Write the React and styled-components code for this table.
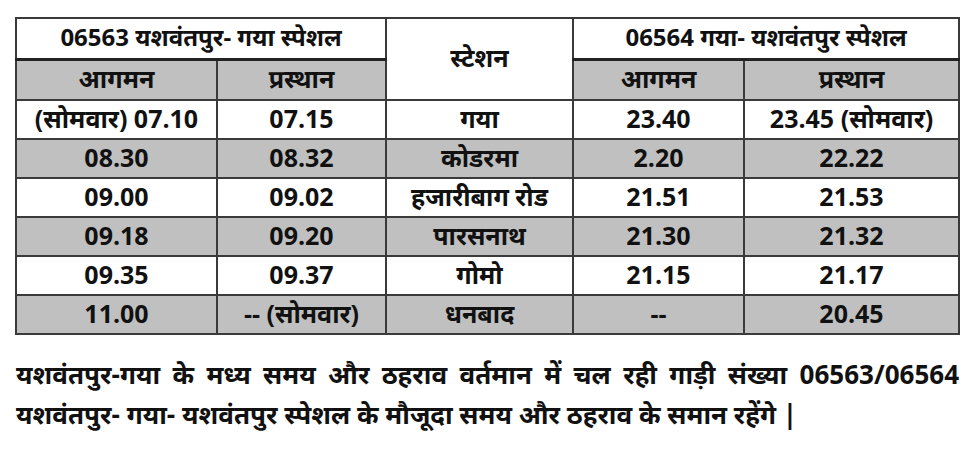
import React from 'react'
import styled, { createGlobalStyle } from 'styled-components'

const GlobalStyle = createGlobalStyle`
  html, body {
    margin: 0;
    padding: 0;
    background: #ffffff;
  }
  body {
    font-family: "Open Sans", "Noto Sans", "Liberation Sans", sans-serif;
    color: #111111;
  }
`

const Page = styled.div`
  width: 979px;
  height: 457px;
  padding: 17px 21px 0 15px;
  box-sizing: border-box;
`

const Table = styled.table`
  width: 943px;
  border-collapse: collapse;
  table-layout: fixed;
  border: 2px solid #333333;
`

const Cell = styled.td`
  border: 2px solid #3a3a3a;
  border-bottom-width: ${(p) => (p.$thick ? '3px' : '2px')};
  border-bottom-color: ${(p) => (p.$thick ? '#222222' : '#3a3a3a')};
  background: ${(p) => (p.$gray ? '#c0c0c0' : '#ffffff')};
  height: ${(p) => p.$h || 34}px;
  padding: 0 0 3px;
  text-align: center;
  vertical-align: middle;
  font-size: ${(p) => p.$size || 25}px;
  font-weight: 700;
  line-height: 1;
  white-space: nowrap;
`

const Note = styled.div`
  margin: 19px 0 0 1px;
  width: 943px;
  font-size: 26px;
  font-weight: 700;
  line-height: 40px;
`

const Line = styled.div`
  white-space: nowrap;
  text-align: ${(p) => (p.$justify ? 'justify' : 'left')};
  text-align-last: ${(p) => (p.$justify ? 'justify' : 'left')};
`

const rows = [
  ['(सोमवार) 07.10', '07.15', 'गया', '23.40', '23.45 (सोमवार)'],
  ['08.30', '08.32', 'कोडरमा', '2.20', '22.22'],
  ['09.00', '09.02', 'हजारीबाग रोड', '21.51', '21.53'],
  ['09.18', '09.20', 'पारसनाथ', '21.30', '21.32'],
  ['09.35', '09.37', 'गोमो', '21.15', '21.17'],
  ['11.00', '-- (सोमवार)', 'धनबाद', '--', '20.45'],
]

export default function App() {
  return (
    <Page>
      <GlobalStyle />
      <Table>
        <colgroup>
          <col style={{ width: 201 }} />
          <col style={{ width: 169 }} />
          <col style={{ width: 187 }} />
          <col style={{ width: 171 }} />
          <col style={{ width: 215 }} />
        </colgroup>
        <tbody>
          <tr>
            <Cell colSpan={2} $thick $h={36} $size={24}>06563 यशवंतपुर- गया स्पेशल</Cell>
            <Cell rowSpan={2}>स्टेशन</Cell>
            <Cell colSpan={2} $thick $h={36} $size={24}>06564 गया- यशवंतपुर स्पेशल</Cell>
          </tr>
          <tr>
            <Cell $gray $h={35}>आगमन</Cell>
            <Cell $gray $h={35}>प्रस्थान</Cell>
            <Cell $gray $h={35}>आगमन</Cell>
            <Cell $gray $h={35}>प्रस्थान</Cell>
          </tr>
          {rows.map((r, i) => (
            <tr key={i}>
              {r.map((v, j) => (
                <Cell key={j} $gray={i % 2 === 1}>{v}</Cell>
              ))}
            </tr>
          ))}
        </tbody>
      </Table>
      <Note>
        <Line $justify>
          यशवंतपुर-गया के मध्य समय और ठहराव वर्तमान में चल रही गाड़ी संख्या 06563/06564
        </Line>
        <Line>
          यशवंतपुर- गया- यशवंतपुर स्पेशल के मौजूदा समय और ठहराव के समान रहेंगे |
        </Line>
      </Note>
    </Page>
  )
}
